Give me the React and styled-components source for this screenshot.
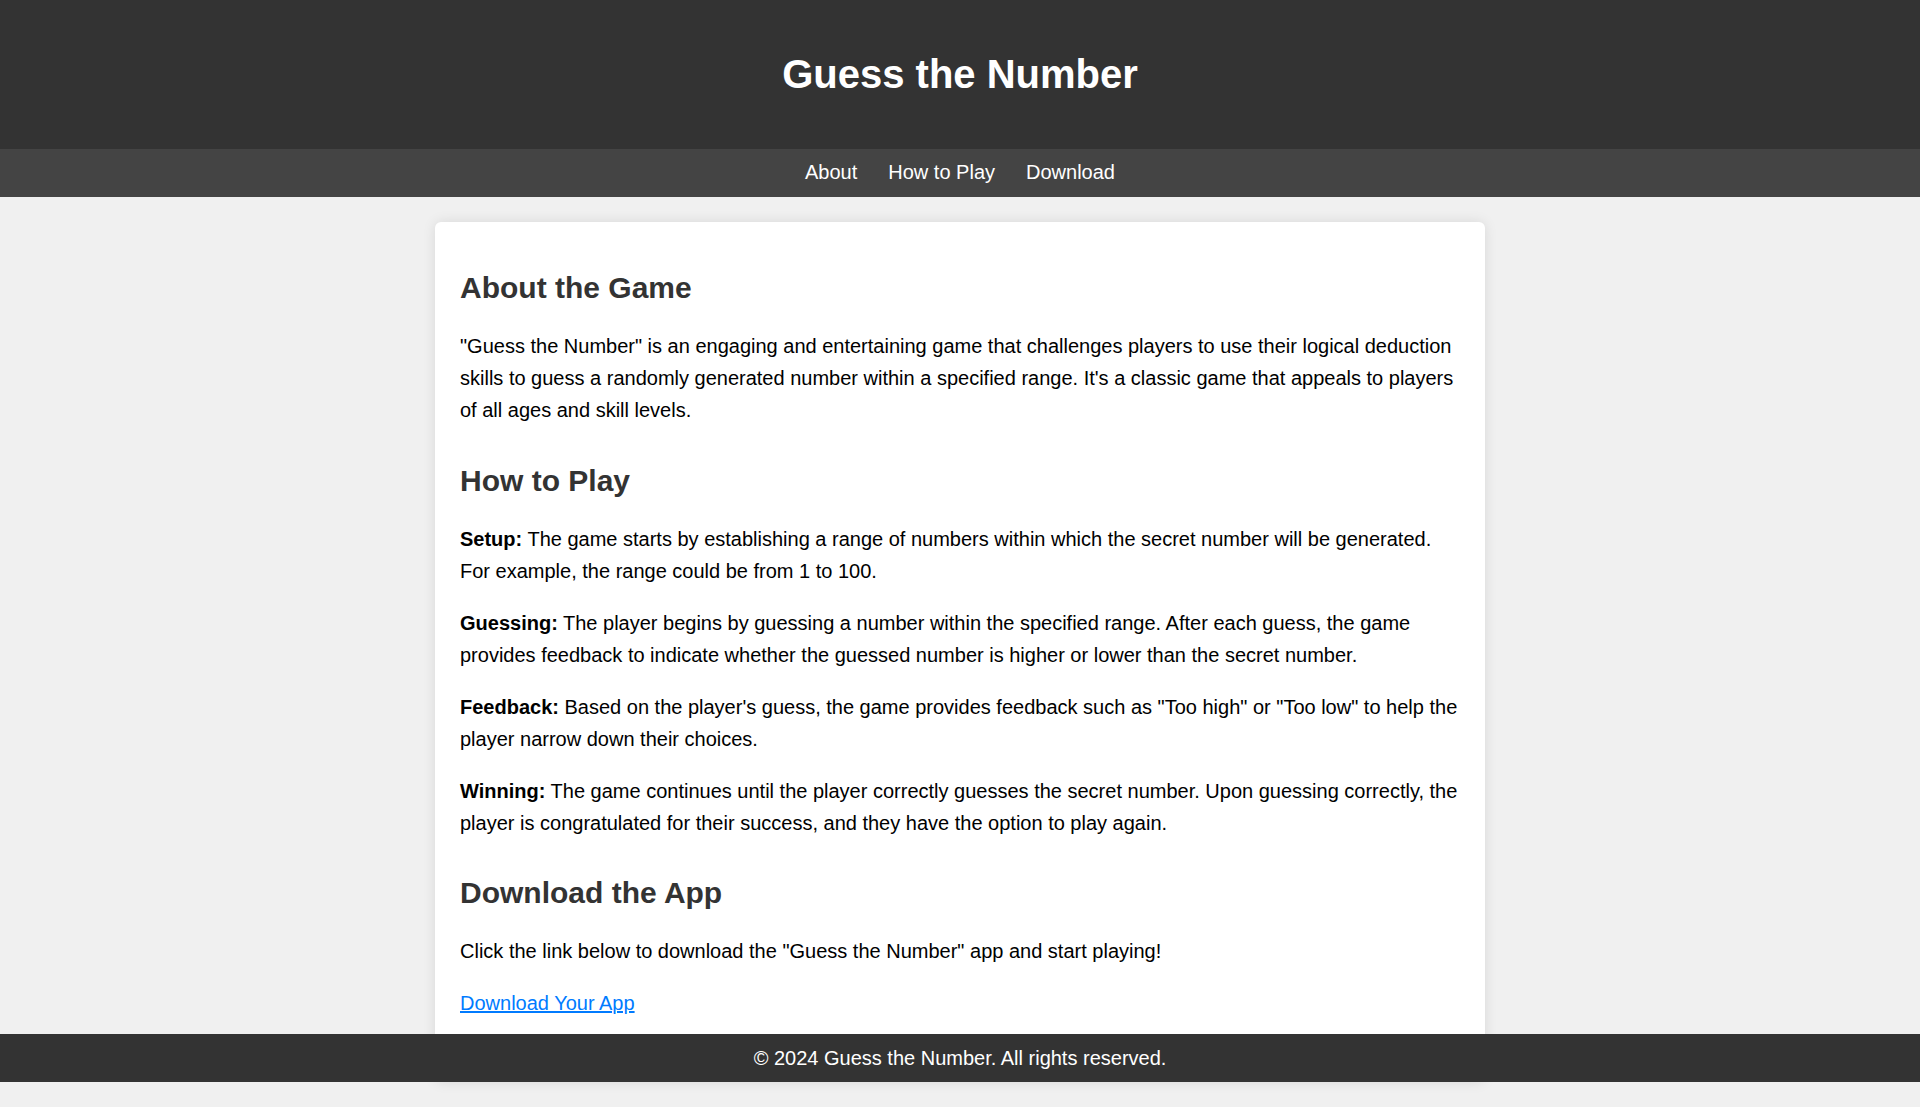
import React from "react";
import styled, { createGlobalStyle } from "styled-components";

const GlobalStyle = createGlobalStyle`
  html, body {
    margin: 0;
    padding: 0;
  }
  body {
    background: #f0f0f0;
    font-family: "Liberation Sans", Arial, sans-serif;
    font-size: 20px;
    color: #000;
  }
  * { box-sizing: content-box; }
`;

const Header = styled.header`
  background: #333;
  color: #fff;
  text-align: center;
  padding: 25px 0;
`;

const Title = styled.h1`
  margin: 26.8px 0;
  font-size: 40px;
  font-weight: bold;
  line-height: normal;
`;

const Nav = styled.nav`
  background: #444;
  display: flex;
  justify-content: center;
  gap: 31px;
  padding: 12.5px 0;
`;

const NavLink = styled.a`
  color: #fff;
  text-decoration: none;
  font-size: 20px;
  line-height: 23px;
`;

const Card = styled.main`
  max-width: 1000px;
  margin: 25px auto;
  padding: 25px;
  background: #fff;
  border-radius: 6px;
  box-shadow: 0 0 12.5px rgba(0, 0, 0, 0.1);
`;

const Section = styled.section`
  margin-bottom: 37.5px;
`;

const Heading = styled.h2`
  color: #333;
  font-size: 30px;
  font-weight: bold;
  line-height: normal;
  margin: 24.9px 0;
`;

const Para = styled.p`
  margin: 20px 0;
  line-height: 1.6;
  font-size: 20px;
`;

const Link = styled.a`
  color: #007bff;
  text-decoration: underline;
`;

const Footer = styled.footer`
  position: fixed;
  left: 0;
  right: 0;
  bottom: 25px;
  background: #333;
  color: #fff;
  text-align: center;
  padding: 12.5px 0;
  font-size: 20px;
  line-height: 23px;
`;

const steps = [
  ["Setup:", "The game starts by establishing a range of numbers within which the secret number will be generated. For example, the range could be from 1 to 100."],
  ["Guessing:", "The player begins by guessing a number within the specified range. After each guess, the game provides feedback to indicate whether the guessed number is higher or lower than the secret number."],
  ["Feedback:", "Based on the player's guess, the game provides feedback such as \"Too high\" or \"Too low\" to help the player narrow down their choices."],
  ["Winning:", "The game continues until the player correctly guesses the secret number. Upon guessing correctly, the player is congratulated for their success, and they have the option to play again."],
];

export default function App() {
  return (
    <>
      <GlobalStyle />
      <Header>
        <Title>Guess the Number</Title>
      </Header>
      <Nav>
        <NavLink href="#about">About</NavLink>
        <NavLink href="#how">How to Play</NavLink>
        <NavLink href="#download">Download</NavLink>
      </Nav>
      <Card>
        <Section id="about">
          <Heading>About the Game</Heading>
          <Para>
            "Guess the Number" is an engaging and entertaining game that challenges players to use their logical deduction skills to guess a randomly generated number within a specified range. It's a classic game that appeals to players of all ages and skill levels.
          </Para>
        </Section>
        <Section id="how">
          <Heading>How to Play</Heading>
          {steps.map(([label, text]) => (
            <Para key={label}>
              <strong>{label}</strong> {text}
            </Para>
          ))}
        </Section>
        <Section id="download">
          <Heading>Download the App</Heading>
          <Para>Click the link below to download the "Guess the Number" app and start playing!</Para>
          <Para>
            <Link href="#">Download Your App</Link>
          </Para>
        </Section>
      </Card>
      <Footer>© 2024 Guess the Number. All rights reserved.</Footer>
    </>
  );
}
